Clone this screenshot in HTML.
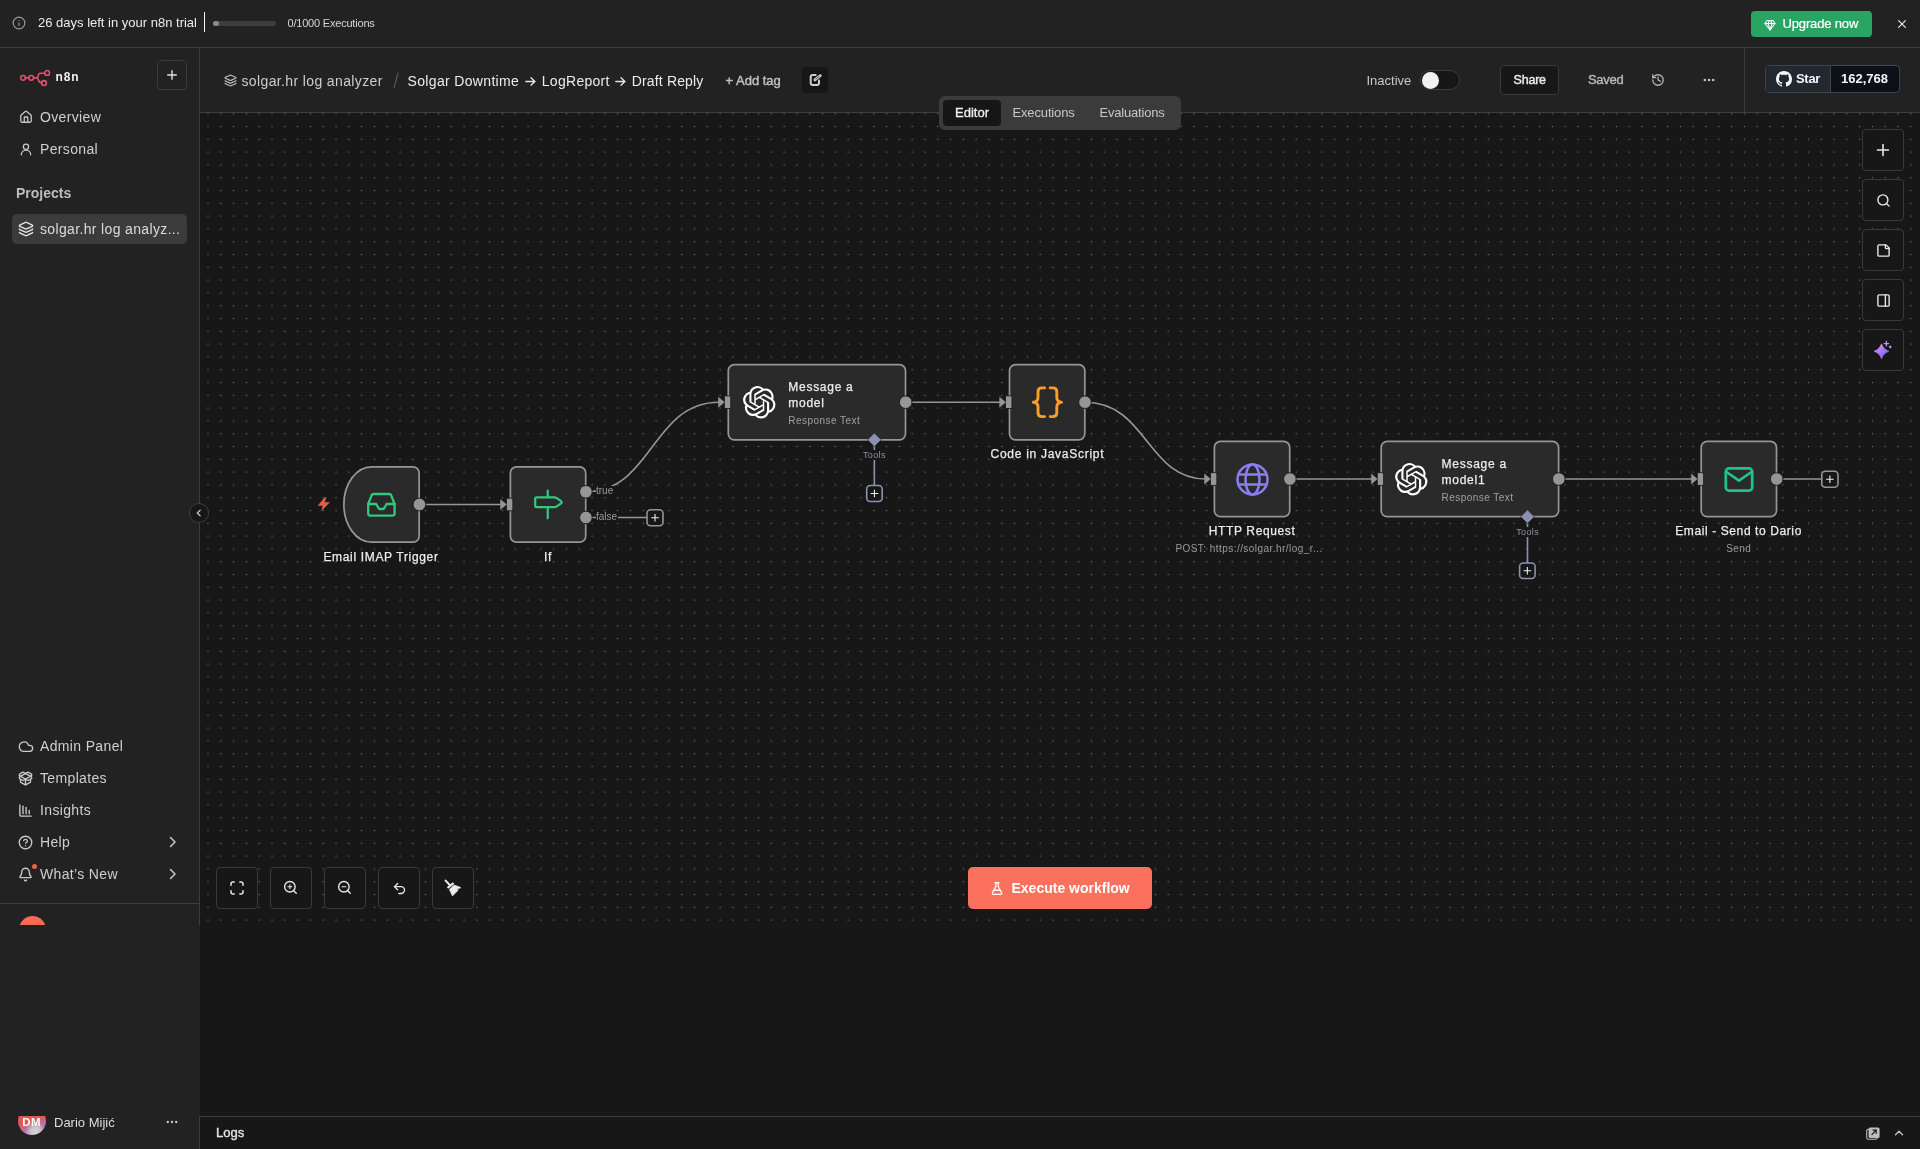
<!DOCTYPE html>
<html><head><meta charset="utf-8">
<style>
*{box-sizing:border-box;margin:0;padding:0}
body{will-change:transform}
html,body{width:1920px;height:1149px;overflow:hidden;background:#171717;font-family:"Liberation Sans",sans-serif;color:#e6e6e6}
.a{position:absolute}
svg{display:block;overflow:visible}
.t{position:absolute;white-space:nowrap;line-height:1}
.ic{position:absolute;fill:none;stroke-linecap:round;stroke-linejoin:round}
.btn{position:absolute;border:1px solid #3a3a3a;border-radius:4px;background:#171717}
.nav{position:absolute;left:40px;font-size:14px;color:#cfcfcf;letter-spacing:0.35px}
.lbl{position:absolute;white-space:nowrap;line-height:1;font-size:12px;color:#ececec;text-align:center;letter-spacing:0.55px;-webkit-text-stroke:0.25px #ececec}
.sub{position:absolute;white-space:nowrap;line-height:1;font-size:10px;color:#9a9a9a;text-align:center;letter-spacing:0.45px}
.node{position:absolute;background:#2b2b2b;border:1.6px solid #8d8d8d;border-radius:6px}
</style></head><body>

<!-- ============ TOP BANNER ============ -->
<div class="a" style="left:0;top:0;width:1920px;height:47px;background:#222"></div>
<div class="a" style="left:0;top:47px;width:1920px;height:1px;background:#3d3d3d"></div>
<svg class="ic" style="left:12px;top:16px" width="14" height="14" viewBox="0 0 24 24" stroke="#9a9a9a" stroke-width="2"><circle cx="12" cy="12" r="10"/><path d="M12 16v-4M12 8h.01"/></svg>
<div class="t" style="left:38px;top:16px;font-size:13px;color:#ececec">26 days left in your n8n trial</div>
<div class="a" style="left:204px;top:12px;width:1.2px;height:20px;background:#f4f4f4"></div>
<div class="a" style="left:213px;top:21px;width:63px;height:5px;border-radius:3px;background:#3e3e3e"></div>
<div class="a" style="left:213px;top:21px;width:6px;height:5px;border-radius:3px;background:#8a8a8a"></div>
<div class="t" style="left:287.5px;top:17.5px;font-size:11px;color:#d6d6d6;letter-spacing:-0.2px">0/1000 Executions</div>
<div class="a" style="left:1751px;top:11px;width:121px;height:26px;border-radius:4px;background:#2aa462"></div>
<svg class="ic" style="left:1764px;top:18.5px" width="12" height="12" viewBox="0 0 24 24" stroke="#fff" stroke-width="2.2"><path d="M6 3h12l4 6-10 13L2 9Z"/><path d="M11 3 8 9l4 13 4-13-3-6"/><path d="M2 9h20"/></svg>
<div class="t" style="left:1782.5px;top:17px;font-size:13px;color:#fff;letter-spacing:-0.15px;-webkit-text-stroke:0.2px #fff">Upgrade now</div>
<svg class="ic" style="left:1897.5px;top:20px" width="8" height="8" viewBox="0 0 8 8" stroke="#e6e6e6" stroke-width="1.2"><path d="M.6.6l6.8 6.8M7.4.6L.6 7.4"/></svg>




<!-- ============ SIDEBAR ============ -->
<div class="a" style="left:0;top:48px;width:200px;height:1101px;background:#222"></div>
<div class="a" style="left:199px;top:48px;width:1px;height:877px;background:#3d3d3d"></div>
<!-- logo -->
<svg class="ic" style="left:19px;top:69px" width="32" height="18" viewBox="0 0 32 18" stroke="#ea4b71" stroke-width="1.55"><circle cx="4" cy="8.85" r="2.4"/><circle cx="12.2" cy="8.85" r="2.4"/><circle cx="28.1" cy="3.9" r="2.4"/><circle cx="25" cy="14" r="2.4"/><path d="M6.4 8.85H9.8M14.6 8.85H17.9C18.6 8.85 19 8 19.2 6.6 19.5 4.9 20.2 4.3 21.6 4.3H25.7M17.9 8.85C18.6 8.85 19 9.6 19.3 10.8 19.7 12.3 20.6 13.6 22.6 13.8"/></svg>
<div class="t" style="left:55.5px;top:71.3px;font-size:12px;font-weight:700;color:#f2f2f2;letter-spacing:0.85px">n8n</div>
<div class="btn" style="left:157px;top:60px;width:30px;height:30px;background:#222"></div>
<svg class="ic" style="left:167px;top:70px" width="10" height="10" viewBox="0 0 10 10" stroke="#e0e0e0" stroke-width="1.4"><path d="M5 .7v8.6M.7 5h8.6"/></svg>

<!-- overview/personal -->
<svg class="ic" style="left:19px;top:110px" width="14" height="14" viewBox="0 0 24 24" stroke="#c8c8c8" stroke-width="2.2"><path d="M15 21v-8a1 1 0 0 0-1-1h-4a1 1 0 0 0-1 1v8"/><path d="M3 10a2 2 0 0 1 .709-1.528l7-5.999a2 2 0 0 1 2.582 0l7 5.999A2 2 0 0 1 21 10v9a2 2 0 0 1-2 2H5a2 2 0 0 1-2-2z"/></svg>
<div class="nav" style="top:109px">Overview</div>
<svg class="ic" style="left:19px;top:142px" width="14" height="14" viewBox="0 0 24 24" stroke="#c8c8c8" stroke-width="2.2"><circle cx="12" cy="8" r="4.5"/><path d="M20 22a8 8 0 0 0-16 0"/></svg>
<div class="nav" style="top:141px">Personal</div>

<div class="t" style="left:16px;top:186px;font-size:14px;font-weight:700;color:#bdbdbd">Projects</div>
<div class="a" style="left:12px;top:214px;width:175px;height:30px;border-radius:5px;background:#3b3b3b"></div>
<svg class="ic" style="left:18px;top:221px" width="16" height="16" viewBox="0 0 24 24" stroke="#e6e6e6" stroke-width="2"><path d="M12.83 2.18a2 2 0 0 0-1.66 0L2.6 6.08a1 1 0 0 0 0 1.83l8.58 3.91a2 2 0 0 0 1.66 0l8.58-3.9a1 1 0 0 0 0-1.83z"/><path d="M2 12a1 1 0 0 0 .58.91l8.6 3.91a2 2 0 0 0 1.65 0l8.58-3.9A1 1 0 0 0 22 12"/><path d="M2 17a1 1 0 0 0 .58.91l8.6 3.91a2 2 0 0 0 1.65 0l8.58-3.9A1 1 0 0 0 22 17"/></svg>
<div class="nav" style="top:221px;color:#dcdcdc">solgar.hr log analyz...</div>

<!-- bottom nav -->
<svg class="ic" style="left:18px;top:739px" width="16" height="14" viewBox="0 0 24 20" stroke="#c8c8c8" stroke-width="2"><path d="M17.5 18H9a7 7 0 1 1 6.71-9h1.79a4.5 4.5 0 1 1 0 9Z"/></svg>
<div class="nav" style="top:738px">Admin Panel</div>
<svg class="ic" style="left:18px;top:771px" width="15" height="15" viewBox="0 0 24 24" stroke="#c8c8c8" stroke-width="2.2"><path d="M12 22v-9"/><path d="M15.17 2.21a1.67 1.67 0 0 1 1.63 0L21 4.57a1.93 1.93 0 0 1 0 3.36L8.82 14.79a1.655 1.655 0 0 1-1.64 0L3 12.43a1.93 1.93 0 0 1 0-3.36z"/><path d="M20 13v3.87a2.06 2.06 0 0 1-1.11 1.83l-6 3.08a1.93 1.93 0 0 1-1.78 0l-6-3.08A2.06 2.06 0 0 1 4 16.87V13"/><path d="M21 12.43a1.93 1.93 0 0 0 0-3.36L8.83 2.2a1.64 1.64 0 0 0-1.63 0L3 4.57a1.93 1.93 0 0 0 0 3.36l12.18 6.86a1.636 1.636 0 0 0 1.63 0z"/></svg>
<div class="nav" style="top:770px">Templates</div>
<svg class="ic" style="left:18px;top:803px" width="15" height="15" viewBox="0 0 24 24" stroke="#c8c8c8" stroke-width="2.2"><path d="M3 3v16a2 2 0 0 0 2 2h16"/><path d="M18 17V12"/><path d="M13 17V7"/><path d="M8 17V5"/></svg>
<div class="nav" style="top:802px">Insights</div>
<svg class="ic" style="left:18px;top:835px" width="15" height="15" viewBox="0 0 24 24" stroke="#c8c8c8" stroke-width="2.2"><circle cx="12" cy="12" r="10"/><path d="M9.09 9a3 3 0 0 1 5.83 1c0 2-3 3-3 3"/><path d="M12 17h.01"/></svg>
<div class="nav" style="top:834px">Help</div>
<svg class="ic" style="left:168px;top:836px" width="10" height="12" viewBox="0 0 10 12" stroke="#c8c8c8" stroke-width="1.5"><path d="M2.5 1.5 7 6l-4.5 4.5"/></svg>
<svg class="ic" style="left:18px;top:867px" width="15" height="15" viewBox="0 0 24 24" stroke="#c8c8c8" stroke-width="2.2"><path d="M10.268 21a2 2 0 0 0 3.464 0"/><path d="M3.262 15.326A1 1 0 0 0 4 17h16a1 1 0 0 0 .74-1.673C19.41 13.956 18 12.499 18 8A6 6 0 0 0 6 8c0 4.499-1.411 5.956-2.738 7.326"/></svg>
<div class="a" style="left:32px;top:864px;width:5px;height:5px;border-radius:50%;background:#ef5f4f"></div>
<div class="nav" style="top:866px">What’s New</div>
<svg class="ic" style="left:168px;top:868px" width="10" height="12" viewBox="0 0 10 12" stroke="#c8c8c8" stroke-width="1.5"><path d="M2.5 1.5 7 6l-4.5 4.5"/></svg>

<div class="a" style="left:0;top:903px;width:199px;height:1px;background:#3d3d3d"></div>
<div class="a" style="left:0;top:904px;width:199px;height:21px;overflow:hidden"><div class="a" style="left:18.5px;top:12px;width:27px;height:27px;border-radius:50%;background:#f96a54"></div></div>

<!-- user -->
<div class="a" style="left:17.9px;top:1116px;width:28.3px;height:19px;overflow:hidden"><div class="a" style="left:0;top:-9.4px;width:28.3px;height:28.3px;border-radius:50%;background:radial-gradient(circle at 62% 88%,#d6d6d6 0,#c9c4cc 16%,rgba(200,190,210,0) 34%),linear-gradient(160deg,#e25a4c 0%,#df5a50 48%,#b574b8 72%,#9a84cc 100%)"></div><div class="t" style="left:4.3px;top:0.6px;font-size:11.5px;font-weight:700;color:#fff;letter-spacing:0.4px">DM</div></div>
<div class="t" style="left:54px;top:1115.5px;font-size:13px;color:#dcdcdc">Dario Mijić</div>
<svg class="ic" style="left:166px;top:1120px;fill:#d0d0d0;stroke:none" width="12" height="4" viewBox="0 0 12 4"><circle cx="1.8" cy="2" r="1.15"/><circle cx="6" cy="2" r="1.15"/><circle cx="10.2" cy="2" r="1.15"/></svg>


<!-- ============ HEADER ============ -->
<div class="a" style="left:200px;top:48px;width:1720px;height:64px;background:#222"></div>
<div class="a" style="left:200px;top:112px;width:1720px;height:1px;background:#3d3d3d"></div>
<svg class="ic" style="left:224px;top:74px" width="13" height="13" viewBox="0 0 24 24" stroke="#bdbdbd" stroke-width="2.2"><path d="M12.83 2.18a2 2 0 0 0-1.66 0L2.6 6.08a1 1 0 0 0 0 1.83l8.58 3.91a2 2 0 0 0 1.66 0l8.58-3.9a1 1 0 0 0 0-1.83z"/><path d="M2 12a1 1 0 0 0 .58.91l8.6 3.91a2 2 0 0 0 1.65 0l8.58-3.9A1 1 0 0 0 22 12"/><path d="M2 17a1 1 0 0 0 .58.91l8.6 3.91a2 2 0 0 0 1.65 0l8.58-3.9A1 1 0 0 0 22 17"/></svg>
<div class="t" style="left:241.5px;top:74px;font-size:14px;color:#cdcdcd;letter-spacing:0.37px">solgar.hr log analyzer</div>
<svg class="ic" style="left:393px;top:72px" width="6" height="17" viewBox="0 0 6 17" stroke="#555" stroke-width="1.2"><path d="M5 1 1 16"/></svg>
<div class="t" style="left:407.5px;top:74px;font-size:14px;color:#ececec;letter-spacing:0.34px">Solgar Downtime</div>
<svg class="ic" style="left:525px;top:77px" width="11" height="9" viewBox="0 0 11 9" stroke="#e6e6e6" stroke-width="1.3"><path d="M.8 4.5h9.2M6 .8l3.9 3.7L6 8.2"/></svg>
<div class="t" style="left:541.8px;top:74px;font-size:14px;color:#ececec;letter-spacing:0.28px">LogReport</div>
<svg class="ic" style="left:615.3px;top:77px" width="11" height="9" viewBox="0 0 11 9" stroke="#e6e6e6" stroke-width="1.3"><path d="M.8 4.5h9.2M6 .8l3.9 3.7L6 8.2"/></svg>
<div class="t" style="left:631.8px;top:74px;font-size:14px;color:#ececec;letter-spacing:0.15px">Draft Reply</div>
<div class="t" style="left:725.5px;top:73.5px;font-size:13px;color:#c2c2c2;-webkit-text-stroke:0.4px #c2c2c2">+ Add tag</div>
<div class="a" style="left:802px;top:67px;width:26px;height:26px;border-radius:4px;background:#161616"></div>
<svg class="ic" style="left:808px;top:72px" width="16" height="16" viewBox="0 0 16 16" stroke="#cfcfcf" stroke-width="2"><path d="M7.6 3.1H4.7Q2.7 3.1 2.7 5.1V11Q2.7 13 4.7 13H9Q11 13 11 11V8.6"/><path stroke-width="2.8" d="M6.9 7.9 12.3 3.7"/><path stroke="#161616" stroke-width="0.7" d="M7.9 7.1 11.4 4.4"/></svg>

<div class="t" style="left:1366.5px;top:73.5px;font-size:13px;color:#c8c8c8">Inactive</div>
<div class="a" style="left:1420px;top:70px;width:40px;height:20px;border-radius:10px;background:#171717;border:1px solid #3d3d3d"></div>
<div class="a" style="left:1421.5px;top:71.5px;width:17px;height:17px;border-radius:50%;background:#f2f2f2"></div>

<div class="a" style="left:1500px;top:65px;width:59px;height:30px;border-radius:4px;background:#171717;border:1px solid #3a3a3a"></div>
<div class="t" style="left:1513.5px;top:74px;font-size:12.5px;color:#ededed;letter-spacing:-0.2px;-webkit-text-stroke:0.4px #ededed">Share</div>
<div class="t" style="left:1588px;top:73px;font-size:13px;color:#b8b8b8;letter-spacing:-0.3px;-webkit-text-stroke:0.4px #b8b8b8">Saved</div>
<svg class="ic" style="left:1651px;top:72.5px" width="14" height="14" viewBox="0 0 24 24" stroke="#b4b4b4" stroke-width="2.2"><path d="M3 12a9 9 0 1 0 9-9 9.75 9.75 0 0 0-6.74 2.74L3 8"/><path d="M3 3v5h5"/><path d="M12 7v5l4 2"/></svg>
<svg class="ic" style="left:1703px;top:78px;fill:#c8c8c8;stroke:none" width="12" height="4" viewBox="0 0 12 4"><circle cx="1.8" cy="2" r="1.25"/><circle cx="6" cy="2" r="1.25"/><circle cx="10.2" cy="2" r="1.25"/></svg>
<div class="a" style="left:1744px;top:48px;width:1px;height:64px;background:#3d3d3d"></div>

<div class="a" style="left:1765px;top:65px;width:135px;height:28px;border-radius:4px;background:#0d1117;border:1px solid #3d444d;overflow:hidden"><div class="a" style="left:0;top:0;width:65px;height:28px;background:#212830;border-right:1px solid #3d444d"></div></div>
<svg class="a" style="left:1776px;top:71px" width="16" height="16" viewBox="0 0 16 16"><path fill="#f0f6fc" d="M8 0C3.58 0 0 3.58 0 8c0 3.54 2.29 6.53 5.47 7.59.4.07.55-.17.55-.38 0-.19-.01-.82-.01-1.49-2.01.37-2.53-.49-2.69-.94-.09-.23-.48-.94-.82-1.13-.28-.15-.68-.52-.01-.53.63-.01 1.08.58 1.23.82.72 1.21 1.87.87 2.33.66.07-.52.28-.87.51-1.07-1.78-.2-3.64-.89-3.64-3.95 0-.87.31-1.59.82-2.15-.08-.2-.36-1.02.08-2.12 0 0 .67-.21 2.2.82.64-.18 1.32-.27 2-.27.68 0 1.36.09 2 .27 1.53-1.04 2.2-.82 2.2-.82.44 1.1.16 1.92.08 2.12.51.56.82 1.27.82 2.15 0 3.07-1.87 3.75-3.65 3.95.29.25.54.73.54 1.48 0 1.07-.01 1.93-.01 2.2 0 .21.15.46.55.38A8.013 8.013 0 0016 8c0-4.42-3.58-8-8-8z"/></svg>
<div class="t" style="left:1796px;top:72px;font-size:13px;font-weight:700;color:#f0f6fc;letter-spacing:-0.3px">Star</div>
<div class="t" style="left:1841px;top:72px;font-size:13px;font-weight:700;color:#f0f6fc">162,768</div>



<!-- ============ CANVAS ============ -->
<svg class="a" style="left:200px;top:113px" width="1720" height="812">
<defs><pattern id="dots" patternUnits="userSpaceOnUse" x="1.6" y="7.1" width="12.8034" height="12.8"><circle cx="6.4" cy="6.4" r="0.75" fill="#6a6a6a"/></pattern></defs>
<rect width="1720" height="812" fill="#171717"/>
<rect width="1720" height="812" fill="url(#dots)"/>
</svg>
<svg class="a" style="left:0;top:0" width="1920" height="1149" viewBox="0 0 1920 1149">
<g fill="none" stroke="#969696" stroke-width="1.6">
  <path d="M425 504.5H502"/>
  <path d="M586.2 491.8C652 491.8 652 402.2 719 402.2"/>
  <path d="M586.2 517.5H647"/>
  <path d="M905.5 402.2H1001"/>
  <path d="M1084.8 402.2C1147 402.2 1147 479.05 1206 479.05"/>
  <path d="M1289.7 479.05H1373"/>
  <path d="M1558.6 479.05H1693"/>
  <path d="M1776.5 479.05H1821.8"/>
</g>
<g fill="none" stroke="#8c91af" stroke-width="1.6">
  <path d="M874.35 446V485.5"/>
  <path d="M1527.5 523V563"/>
</g>
<!-- nodes -->
<g fill="#2a2a2a" stroke="#969696" stroke-width="1.7">
  <path d="M371.5 466.85H413.15A6 6 0 0 1 419.15 472.85V536.15A6 6 0 0 1 413.15 542.15H371.5A27.65 37.65 0 0 1 343.85 504.5V504.5A27.65 37.65 0 0 1 371.5 466.85Z"/>
  <rect x="510.4" y="466.85" width="75.3" height="75.3" rx="6"/>
  <rect x="728.3" y="364.55" width="177.2" height="75.3" rx="6"/>
  <rect x="1009.5" y="364.55" width="75.3" height="75.3" rx="6"/>
  <rect x="1214.4" y="441.4" width="75.3" height="75.3" rx="6"/>
  <rect x="1381.2" y="441.4" width="177.4" height="75.3" rx="6"/>
  <rect x="1701.2" y="441.4" width="75.3" height="75.3" rx="6"/>
</g>
<!-- output handles -->
<g fill="#969696" stroke="#171717" stroke-width="0.9">
  <circle cx="419.4" cy="504.5" r="6.3"/>
  <circle cx="585.9" cy="491.8" r="6.3"/>
  <circle cx="585.9" cy="517.5" r="6.3"/>
  <circle cx="905.7" cy="402.2" r="6.3"/>
  <circle cx="1085" cy="402.2" r="6.3"/>
  <circle cx="1289.9" cy="479.05" r="6.3"/>
  <circle cx="1558.8" cy="479.05" r="6.3"/>
  <circle cx="1776.7" cy="479.05" r="6.3"/>
</g>
<!-- input handles + arrows -->
<g fill="#969696">
  <rect x="506.45" y="498.20" width="6.4" height="12.6" stroke="#161616" stroke-width="0.8"/>
  <path d="M500.55 499.50L506.45 504.50L500.55 509.50Z" stroke="#969696" stroke-width="0.5" stroke-linejoin="round"/>
  <rect x="724.35" y="395.90" width="6.4" height="12.6" stroke="#161616" stroke-width="0.8"/>
  <path d="M718.45 397.20L724.35 402.20L718.45 407.20Z" stroke="#969696" stroke-width="0.5" stroke-linejoin="round"/>
  <rect x="1005.55" y="395.90" width="6.4" height="12.6" stroke="#161616" stroke-width="0.8"/>
  <path d="M999.65 397.20L1005.55 402.20L999.65 407.20Z" stroke="#969696" stroke-width="0.5" stroke-linejoin="round"/>
  <rect x="1210.45" y="472.75" width="6.4" height="12.6" stroke="#161616" stroke-width="0.8"/>
  <path d="M1204.55 474.05L1210.45 479.05L1204.55 484.05Z" stroke="#969696" stroke-width="0.5" stroke-linejoin="round"/>
  <rect x="1377.25" y="472.75" width="6.4" height="12.6" stroke="#161616" stroke-width="0.8"/>
  <path d="M1371.35 474.05L1377.25 479.05L1371.35 484.05Z" stroke="#969696" stroke-width="0.5" stroke-linejoin="round"/>
  <rect x="1697.25" y="472.75" width="6.4" height="12.6" stroke="#161616" stroke-width="0.8"/>
  <path d="M1691.35 474.05L1697.25 479.05L1691.35 484.05Z" stroke="#969696" stroke-width="0.5" stroke-linejoin="round"/>
</g>
<!-- tool diamonds -->
<g fill="#8c91af" stroke="#1a1a1a" stroke-width="0.6">
  <path d="M874.35 433L881.2 439.85L874.35 446.7L867.5 439.85Z"/>
  <path d="M1527.5 509.85L1534.35 516.7L1527.5 523.55L1520.65 516.7Z"/>
</g>
<!-- plus boxes -->
<g fill="#171717" stroke-width="1.6">
  <rect x="647" y="509.8" width="16" height="16" rx="3.5" stroke="#969696"/>
  <rect x="1821.8" y="471.2" width="16.2" height="16" rx="3.5" stroke="#969696"/>
  <rect x="866.7" y="485.5" width="15.5" height="16" rx="3.5" stroke="#8c91af"/>
  <rect x="1519.6" y="563" width="15.5" height="15.5" rx="3.5" stroke="#8c91af"/>
</g>
<g fill="none" stroke="#f0f0f0" stroke-width="1.1">
  <path d="M655 514V521.6M651.2 517.8H658.8"/>
  <path d="M1829.9 475.4V483M1826.1 479.2H1833.7"/>
  <path d="M874.45 489.7V497.3M870.65 493.5H878.25"/>
  <path d="M1527.35 567V574.6M1523.55 570.8H1531.15"/>
</g>
<!-- lightning -->
<path d="M324.9 497.6L318.2 505.4H323.1L321.7 510.4L329.4 502.4H324.3L326.1 497.6Z" fill="#e5604c" stroke="#e5604c" stroke-width="0.6" stroke-linejoin="round"/>
</svg>

<!-- node icons -->
<svg class="ic" style="left:365px;top:491px" width="33" height="28" viewBox="0 0 33 28" stroke="#32c97e" stroke-width="2.3"><path d="M8.6 3H24.2Q25.6 3 26.2 4.3L29.6 13V22.6Q29.6 24.6 27.6 24.6H5.2Q3.2 24.6 3.2 22.6V13L6.6 4.3Q7.2 3 8.6 3Z"/><path d="M3.2 13H11.2L13.6 17.2Q14.2 18 15.2 18H17.6Q18.6 18 19.2 17.2L21.6 13H29.6"/></svg>
<svg class="ic" style="left:531.25px;top:489.15px" width="33.5" height="30.7" viewBox="0 0 24 22" stroke="#32c97e" stroke-width="1.6"><path d="M12 13v8"/><path d="M12 1.2v4.5"/><path d="M4 6a1 1 0 0 0-1 1v5a1 1 0 0 0 1 1h13a2 2 0 0 0 1.152-.365l3.424-2.317a1 1 0 0 0 0-1.635l-3.424-2.318A2 2 0 0 0 17 6z"/></svg>
<svg class="a" style="left:742.5px;top:386px" width="32.5" height="32.5" viewBox="0 0 24 24"><path fill="#fff" d="M22.2819 9.8211a5.9847 5.9847 0 0 0-.5157-4.9108 6.0462 6.0462 0 0 0-6.5098-2.9A6.0651 6.0651 0 0 0 4.9807 4.1818a5.9847 5.9847 0 0 0-3.9977 2.9 6.0462 6.0462 0 0 0 .7427 7.0966 5.98 5.98 0 0 0 .511 4.9107 6.051 6.051 0 0 0 6.5146 2.9001A5.9847 5.9847 0 0 0 13.2599 24a6.0557 6.0557 0 0 0 5.7718-4.2058 5.9894 5.9894 0 0 0 3.9977-2.9001 6.0557 6.0557 0 0 0-.7475-7.0729zm-9.022 12.6081a4.4755 4.4755 0 0 1-2.8764-1.0408l.1419-.0804 4.7783-2.7582a.7948.7948 0 0 0 .3927-.6813v-6.7369l2.02 1.1686a.071.071 0 0 1 .038.052v5.5826a4.504 4.504 0 0 1-4.4945 4.4944zm-9.6607-4.1254a4.4708 4.4708 0 0 1-.5346-3.0137l.142.0852 4.783 2.7582a.7712.7712 0 0 0 .7806 0l5.8428-3.3685v2.3324a.0804.0804 0 0 1-.0332.0615L9.74 19.9502a4.4992 4.4992 0 0 1-6.1408-1.6464zM2.3408 7.8956a4.485 4.485 0 0 1 2.3655-1.9728V11.6a.7664.7664 0 0 0 .3879.6765l5.8144 3.3543-2.0201 1.1685a.0757.0757 0 0 1-.071 0l-4.8303-2.7865A4.504 4.504 0 0 1 2.3408 7.872zm16.5963 3.8558L13.1038 8.364 15.1192 7.2a.0757.0757 0 0 1 .071 0l4.8303 2.7913a4.4944 4.4944 0 0 1-.6765 8.1042v-5.6772a.79.79 0 0 0-.407-.667zm2.0107-3.0231l-.142-.0852-4.7735-2.7818a.7759.7759 0 0 0-.7854 0L9.409 9.2297V6.8974a.0662.0662 0 0 1 .0284-.0615l4.8303-2.7866a4.4992 4.4992 0 0 1 6.6802 4.66zM8.3065 12.863l-2.02-1.1638a.0804.0804 0 0 1-.038-.0567V6.0742a4.4992 4.4992 0 0 1 7.3757-3.4537l-.142.0805L8.704 5.459a.7948.7948 0 0 0-.3927.6813zm1.0976-2.3654l2.602-1.4998 2.6069 1.4998v2.9994l-2.5974 1.4997-2.6067-1.4997Z"/></svg>
<svg class="a" style="left:1395.4px;top:463.2px" width="32.5" height="32.5" viewBox="0 0 24 24"><path fill="#fff" d="M22.2819 9.8211a5.9847 5.9847 0 0 0-.5157-4.9108 6.0462 6.0462 0 0 0-6.5098-2.9A6.0651 6.0651 0 0 0 4.9807 4.1818a5.9847 5.9847 0 0 0-3.9977 2.9 6.0462 6.0462 0 0 0 .7427 7.0966 5.98 5.98 0 0 0 .511 4.9107 6.051 6.051 0 0 0 6.5146 2.9001A5.9847 5.9847 0 0 0 13.2599 24a6.0557 6.0557 0 0 0 5.7718-4.2058 5.9894 5.9894 0 0 0 3.9977-2.9001 6.0557 6.0557 0 0 0-.7475-7.0729zm-9.022 12.6081a4.4755 4.4755 0 0 1-2.8764-1.0408l.1419-.0804 4.7783-2.7582a.7948.7948 0 0 0 .3927-.6813v-6.7369l2.02 1.1686a.071.071 0 0 1 .038.052v5.5826a4.504 4.504 0 0 1-4.4945 4.4944zm-9.6607-4.1254a4.4708 4.4708 0 0 1-.5346-3.0137l.142.0852 4.783 2.7582a.7712.7712 0 0 0 .7806 0l5.8428-3.3685v2.3324a.0804.0804 0 0 1-.0332.0615L9.74 19.9502a4.4992 4.4992 0 0 1-6.1408-1.6464zM2.3408 7.8956a4.485 4.485 0 0 1 2.3655-1.9728V11.6a.7664.7664 0 0 0 .3879.6765l5.8144 3.3543-2.0201 1.1685a.0757.0757 0 0 1-.071 0l-4.8303-2.7865A4.504 4.504 0 0 1 2.3408 7.872zm16.5963 3.8558L13.1038 8.364 15.1192 7.2a.0757.0757 0 0 1 .071 0l4.8303 2.7913a4.4944 4.4944 0 0 1-.6765 8.1042v-5.6772a.79.79 0 0 0-.407-.667zm2.0107-3.0231l-.142-.0852-4.7735-2.7818a.7759.7759 0 0 0-.7854 0L9.409 9.2297V6.8974a.0662.0662 0 0 1 .0284-.0615l4.8303-2.7866a4.4992 4.4992 0 0 1 6.6802 4.66zM8.3065 12.863l-2.02-1.1638a.0804.0804 0 0 1-.038-.0567V6.0742a4.4992 4.4992 0 0 1 7.3757-3.4537l-.142.0805L8.704 5.459a.7948.7948 0 0 0-.3927.6813zm1.0976-2.3654l2.602-1.4998 2.6069 1.4998v2.9994l-2.5974 1.4997-2.6067-1.4997Z"/></svg>
<svg class="ic" style="left:1030px;top:385px" width="35" height="35" viewBox="0 0 35 35" stroke="#ff9b26" stroke-width="2.9"><path d="M14.6 2.9H12C9.6 2.9 8 4.3 8 6.7V12.6C8 15.2 6.6 17 3.3 17.2 6.6 17.4 8 19.2 8 21.8V27.8C8 30.2 9.6 31.6 12 31.6H14.6"/><path d="M20.2 2.9H22.8C25.2 2.9 26.8 4.3 26.8 6.7V12.6C26.8 15.2 28.2 17 31.5 17.2 28.2 17.4 26.8 19.2 26.8 21.8V27.8C26.8 30.2 25.2 31.6 22.8 31.6H20.2"/></svg>
<svg class="ic" style="left:1234.5px;top:461.5px" width="35" height="35" viewBox="0 0 35 35" stroke="#8b7ef0" stroke-width="2.5"><circle cx="17.5" cy="17.5" r="15"/><ellipse cx="17.5" cy="17.5" rx="7" ry="15"/><path d="M4 12.5h27M4 22.5h27"/></svg>
<svg class="ic" style="left:1722.5px;top:465.5px" width="32" height="27" viewBox="0 0 32 27" stroke="#20c38d" stroke-width="2.7"><rect x="2.8" y="2.4" width="26.4" height="22.2" rx="3.2"/><path d="M3.5 6l12.5 8.7L28.5 6"/></svg>

<!-- node text -->
<div class="lbl" style="left:281px;top:550.7px;width:200px;letter-spacing:0.67px">Email IMAP Trigger</div>
<div class="lbl" style="left:448px;top:550.7px;width:200px">If</div>
<div class="t" style="left:788.3px;top:379.3px;font-size:12px;line-height:16px;color:#ececec;letter-spacing:0.72px;white-space:normal;width:110px;-webkit-text-stroke:0.25px #ececec">Message a<br>model</div>
<div class="t" style="left:788.3px;top:416.3px;font-size:10px;color:#a0a0a0;letter-spacing:0.45px">Response Text</div>
<div class="lbl" style="left:947.4px;top:448.2px;width:200px;letter-spacing:0.72px">Code in JavaScript</div>
<div class="a" style="left:862.5px;top:450px;width:24px;height:10px;background:#171717"></div>
<div class="t" style="left:863px;top:451.0px;font-size:9px;color:#8c90aa;letter-spacing:0.36px">Tools</div>
<div class="lbl" style="left:1152.1px;top:524.8px;width:200px;letter-spacing:0.62px">HTTP Request</div>
<div class="sub" style="left:1149px;top:544.2px;width:200px">POST: https://solgar.hr/log_r...</div>
<div class="t" style="left:1441.6px;top:456.3px;font-size:12px;line-height:16px;color:#ececec;letter-spacing:0.72px;white-space:normal;width:110px;-webkit-text-stroke:0.25px #ececec">Message a<br>model1</div>
<div class="t" style="left:1441.6px;top:493.1px;font-size:10px;color:#a0a0a0;letter-spacing:0.45px">Response Text</div>
<div class="a" style="left:1515.7px;top:526.8px;width:24px;height:10px;background:#171717"></div>
<div class="t" style="left:1516.2px;top:527.8px;font-size:9px;color:#8c90aa;letter-spacing:0.36px">Tools</div>
<div class="lbl" style="left:1638.6px;top:525.4px;width:200px;letter-spacing:0.6px">Email - Send to Dario</div>
<div class="sub" style="left:1638.8px;top:544.1px;width:200px">Send</div>
<div class="a" style="left:596px;top:486px;width:17.5px;height:11px;background:#171717"></div>
<div class="t" style="left:596px;top:486.3px;font-size:10px;color:#9a9a9a">true</div>
<div class="a" style="left:596px;top:512px;width:21.5px;height:11px;background:#171717"></div>
<div class="t" style="left:596px;top:512.4px;font-size:10px;color:#9a9a9a">false</div>
<div class="a" style="left:189px;top:503px;width:20px;height:20px;border-radius:50%;background:#171717;border:1.2px solid #3d3d3d"></div>
<svg class="ic" style="left:194.5px;top:509px" width="8" height="8" viewBox="0 0 8 8" stroke="#c4c4c4" stroke-width="1.3"><path d="M5.1 1.3 2.3 4 5.1 6.7"/></svg>

<!-- right controls -->
<div class="btn" style="left:1862px;top:129px;width:42px;height:42px"></div>
<svg class="ic" style="left:1876px;top:143px" width="14" height="14" viewBox="0 0 14 14" stroke="#e8e8e8" stroke-width="1.6"><path d="M7 1.5v11M1.5 7h11"/></svg>
<div class="btn" style="left:1862px;top:179px;width:42px;height:42px"></div>
<svg class="ic" style="left:1875.5px;top:192.5px" width="15" height="15" viewBox="0 0 24 24" stroke="#e8e8e8" stroke-width="2.2"><circle cx="11" cy="11" r="8"/><path d="m21 21-4.3-4.3"/></svg>
<div class="btn" style="left:1862px;top:229px;width:42px;height:42px"></div>
<svg class="ic" style="left:1875.5px;top:242.5px" width="15" height="15" viewBox="0 0 24 24" stroke="#e8e8e8" stroke-width="2.2"><path d="M16 3H5a2 2 0 0 0-2 2v14a2 2 0 0 0 2 2h14a2 2 0 0 0 2-2V8Z"/><path d="M15 3v4a2 2 0 0 0 2 2h4"/></svg>
<div class="btn" style="left:1862px;top:279px;width:42px;height:42px"></div>
<svg class="ic" style="left:1875.5px;top:292.5px" width="15" height="15" viewBox="0 0 24 24" stroke="#e8e8e8" stroke-width="2.2"><rect x="3" y="3" width="18" height="18" rx="2"/><path d="M15 3v18"/></svg>
<div class="btn" style="left:1862px;top:329px;width:42px;height:42px"></div>
<svg class="a" style="left:1872px;top:339px" width="22" height="22" viewBox="0 0 22 22"><defs><linearGradient id="spk" x1="0" y1="0" x2="0.6" y2="1"><stop offset="0" stop-color="#d29af7"/><stop offset="1" stop-color="#8a62ee"/></linearGradient></defs><path fill="url(#spk)" stroke="url(#spk)" stroke-width="1.2" stroke-linejoin="round" d="M9.5 5.4Q11.3 10.5 16.4 12.3 11.3 14.1 9.5 19.3 7.7 14.1 2.6 12.3 7.7 10.5 9.5 5.4Z"/><path fill="none" stroke="#c995f5" stroke-width="1.3" stroke-linecap="round" d="M14.4 2.4v4.4M12.2 4.6h4.4"/><path fill="#d08fe0" d="M18.2 6.3l1.6 1.6-1.6 1.6-1.6-1.6z"/></svg>

<!-- bottom controls -->
<div class="btn" style="left:216px;top:867px;width:42px;height:42px"></div>
<svg class="ic" style="left:230px;top:881px" width="14" height="14" viewBox="0 0 14 14" stroke="#e8e8e8" stroke-width="1.5"><path d="M1 4.2V3a2 2 0 0 1 2-2h1.2M9.8 1H11a2 2 0 0 1 2 2v1.2M13 9.8V11a2 2 0 0 1-2 2H9.8M4.2 13H3a2 2 0 0 1-2-2V9.8"/></svg>
<div class="btn" style="left:270px;top:867px;width:42px;height:42px"></div>
<svg class="ic" style="left:283px;top:880.3px" width="15" height="15" viewBox="0 0 24 24" stroke="#e8e8e8" stroke-width="2.2"><circle cx="11" cy="10.8" r="8.4"/><path d="m21.2 21.2-4.35-4.35"/><path stroke-width="1.7" d="M11 7.6v6.4M7.8 10.8h6.4"/></svg>
<div class="btn" style="left:324px;top:867px;width:42px;height:42px"></div>
<svg class="ic" style="left:337px;top:880.3px" width="15" height="15" viewBox="0 0 24 24" stroke="#e8e8e8" stroke-width="2.2"><circle cx="11" cy="10.8" r="8.4"/><path d="m21.2 21.2-4.35-4.35"/><path stroke-width="1.7" d="M7.8 10.8h6.4"/></svg>
<div class="btn" style="left:378px;top:867px;width:42px;height:42px"></div>
<svg class="ic" style="left:391.5px;top:880.5px" width="15" height="15" viewBox="0 0 24 24" stroke="#e8e8e8" stroke-width="2.2"><path d="M9 14 4 9l5-5"/><path d="M4 9h10.5a5.5 5.5 0 0 1 0 11H11"/></svg>
<div class="btn" style="left:432px;top:867px;width:42px;height:42px"></div>
<svg class="a" style="left:436px;top:872px" width="32" height="32" viewBox="0 0 32 32"><path fill="none" stroke="#ececec" stroke-width="2.1" stroke-linecap="round" d="M9.6 8.6 13.4 12.6"/><path fill="none" stroke="#ececec" stroke-width="2.2" stroke-linecap="round" d="M12.2 15.4 16.9 11.6"/><path fill="#ececec" stroke="#ececec" stroke-width="0.6" stroke-linejoin="round" d="M13.4 17.4 18.2 13.1 24.2 15.2 24.8 16 21.4 16.8 22 18.4 16.4 24Z"/></svg>

<!-- execute -->
<div class="a" style="left:968px;top:867px;width:183.5px;height:42px;border-radius:5px;background:#fb715d"></div>
<svg class="ic" style="left:990px;top:880.5px" width="14" height="15" viewBox="0 0 24 24" stroke="#fff" stroke-width="2.2"><path d="M14 2v6a2 2 0 0 0 .245.96l5.51 10.08A2 2 0 0 1 18 22H6a2 2 0 0 1-1.755-2.96l5.51-10.08A2 2 0 0 0 10 8V2"/><path d="M6.453 15h11.094"/><path d="M8.5 2h7"/></svg>
<div class="t" style="left:1011.5px;top:881.3px;font-size:14px;font-weight:700;color:#fff">Execute workflow</div>


<!-- ============ LOGS ============ -->
<div class="a" style="left:199px;top:1116px;width:1721px;height:33px;background:#171717;border-top:1px solid #3d3d3d;border-left:1px solid #3d3d3d"></div>
<div class="t" style="left:216px;top:1126.3px;font-size:13px;color:#e6e6e6;-webkit-text-stroke:0.35px #e6e6e6">Logs</div>
<svg class="a" style="left:1866px;top:1126.5px" width="14" height="13" viewBox="0 0 14 13"><rect x="0.7" y="2.2" width="10.5" height="10.1" rx="1.6" fill="none" stroke="#bdbdbd" stroke-width="1.1"/><rect x="2.6" y="0.4" width="11" height="10.6" rx="1.6" fill="#bdbdbd"/><path d="M5.6 7.8 10.2 3.2M6.6 3.2h3.6v3.6" fill="none" stroke="#171717" stroke-width="1.2"/></svg>
<svg class="ic" style="left:1894px;top:1129px" width="10" height="7" viewBox="0 0 10 7" stroke="#c8c8c8" stroke-width="1.3"><path d="M1.5 5.8 5 2.3l3.5 3.5"/></svg>
<!-- tabs -->
<div class="a" style="left:939px;top:96px;width:242px;height:34px;border-radius:6px;background:#3b3b3b"></div>
<div class="a" style="left:943px;top:100px;width:58px;height:26px;border-radius:4px;background:#161616"></div>
<div class="t" style="left:955px;top:106px;font-size:13px;color:#f0f0f0;-webkit-text-stroke:0.3px #f0f0f0">Editor</div>
<div class="t" style="left:1012.5px;top:106px;font-size:13px;color:#c6c6c6;letter-spacing:-0.15px">Executions</div>
<div class="t" style="left:1099.5px;top:106px;font-size:13px;color:#c6c6c6;letter-spacing:-0.2px">Evaluations</div>


</body></html>
